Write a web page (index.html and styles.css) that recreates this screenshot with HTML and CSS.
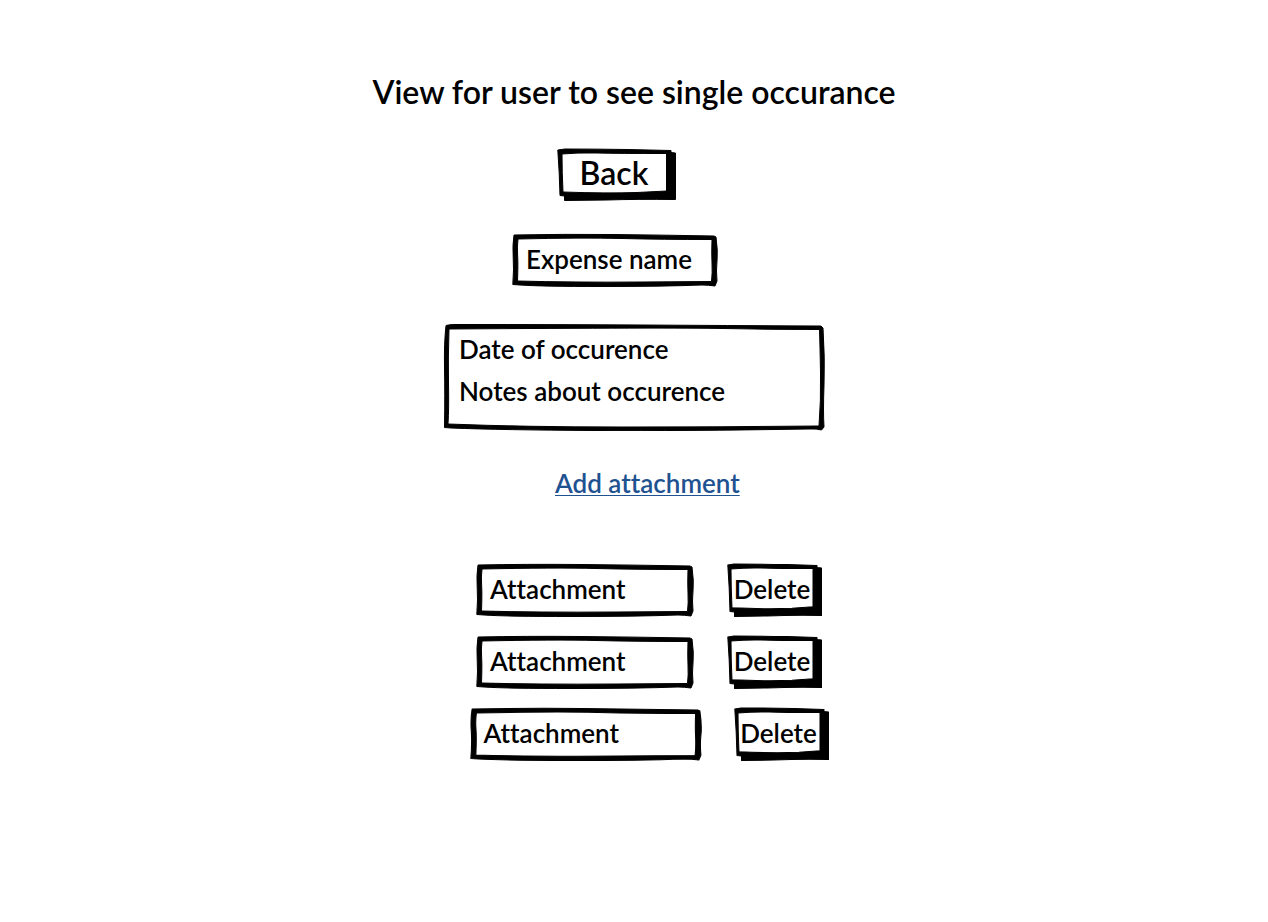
FILE: index.html
```html
<!DOCTYPE html>
<html lang="en">
<head>
<meta charset="utf-8">
<meta name="viewport" content="width=device-width, initial-scale=1">
<title>Single occurance</title>
<link rel="stylesheet" href="styles.css">
</head>
<body>
<svg class="defs" aria-hidden="true">
  <symbol id="box-s" viewBox="0 0 206 54" preserveAspectRatio="none">
    <path fill-rule="evenodd" d="M2 2Q50 1 100 1.500T202 3L204 4Q206 18 205 28T205 48L203 53Q196 52 190 52Q150 53.500 90 53.500T8 52L.8 51.500Q2 36 1.200 24T2 2ZM6 6Q5 14 5.600 22T5.500 48Q60 49.500 130 49L199.500 48.500Q200.500 40 200 30T200 6.500Q150 6.500 110 5.500T6 6Z"/>
  </symbol>
  <symbol id="box-l" viewBox="0 0 382 108" preserveAspectRatio="none">
    <path fill-rule="evenodd" d="M3 2.500Q6 1.500 12 1.500Q120 1.500 200 2T378 3L380 5Q382 35 381 62T381 104L378.500 107Q374 105.500 366 106Q240 108 150 107.500T8 105L1.500 104.500Q2 70 1.500 45T3 2.500ZM6 6Q5 35 5.500 60T5 101Q80 104 180 104T376 103Q378 78 377.500 50T376.500 6.500Q330 6.500 280 5.500T6 6Z"/>
  </symbol>
  <symbol id="box-m" viewBox="0 0 218 54" preserveAspectRatio="none">
    <path fill-rule="evenodd" d="M2 2Q50 1 105 1.500T214 3L216 4Q218 18 217 28T217 48L215 53Q208 52 202 52Q160 53.500 95 53.500T8 52L.8 51.500Q2 36 1.200 24T2 2ZM6 6Q5 14 5.600 22T5.500 48Q60 49.500 140 49L211.500 48.500Q212.500 40 212 30T212 6.500Q160 6.500 120 5.500T6 6Z"/>
  </symbol>
  <symbol id="btn-l" viewBox="0 0 119 53" preserveAspectRatio="none">
    <path fill-rule="evenodd" d="M.8 2L8 1Q40 1 70 1.500L114 2.500V4.500L118.500 5V51.500Q80 51 50 52L7.500 52.500V48L3 47.500Q2.500 25 .8 2ZM5 6Q5 24 6 44Q50 45.500 80 44.500L109.500 43V5.500Q60 5.500 40 5T5 6Z"/>
  </symbol>
  <symbol id="btn-s" viewBox="0 0 95 53" preserveAspectRatio="none">
    <path fill-rule="evenodd" d="M.8 2L7 1Q35 1 60 1.500L90 2.500V4.500L94.500 5V51.500Q65 51 40 52L7.500 52.500V48L3 47.500Q2.500 25 .8 2ZM4 6Q4 24 5 44Q40 45.500 65 44.500L86 43V5.500Q50 5.500 35 5T4 6Z"/>
  </symbol>
</svg>
<main class="page">
  <h1 class="title">View for user to see single occurance</h1>
  <div class="content">
    <button class="btn btn-back" type="button"><svg class="frame" aria-hidden="true"><use href="#btn-l"/></svg>Back</button>
    <h2 class="box name"><svg class="frame" aria-hidden="true"><use href="#box-s"/></svg>Expense name</h2>
    <section class="box details">
      <svg class="frame" aria-hidden="true"><use href="#box-l"/></svg>
      <p class="line">Date of occurence</p>
      <p class="line">Notes about occurence</p>
    </section>
    <a class="add" href="#">Add attachment</a>
    <ul class="list">
      <li class="row">
        <span class="box file"><svg class="frame" aria-hidden="true"><use href="#box-m"/></svg>Attachment</span>
        <button class="btn" type="button"><svg class="frame" aria-hidden="true"><use href="#btn-s"/></svg>Delete</button>
      </li>
      <li class="row">
        <span class="box file"><svg class="frame" aria-hidden="true"><use href="#box-m"/></svg>Attachment</span>
        <button class="btn" type="button"><svg class="frame" aria-hidden="true"><use href="#btn-s"/></svg>Delete</button>
      </li>
      <li class="row row-wide">
        <span class="box file"><svg class="frame" aria-hidden="true"><use href="#box-m"/></svg>Attachment</span>
        <button class="btn" type="button"><svg class="frame" aria-hidden="true"><use href="#btn-s"/></svg>Delete</button>
      </li>
    </ul>
  </div>
</main>
</body>
</html>
```
FILE: styles.css
```css
* { box-sizing: border-box; }

body {
  margin: 0;
  background: #fff;
  color: #000;
  font-family: Lato, "Open Sans", sans-serif;
  font-size: 26px;
  font-weight: 600;
  font-variant-ligatures: none;
  line-height: 32px;
}

h1, h2, p, ul { margin: 0; padding: 0; font-weight: inherit; }

.defs { position: absolute; width: 0; height: 0; }

.page {
  display: flex;
  flex-direction: column;
  align-items: center;
  gap: 38px;
  padding: 74px 16px 32px;
}

.title { font-size: 32px; line-height: 36px; text-align: center; }

.content {
  display: flex;
  flex-direction: column;
  align-items: flex-start;
  width: 100%;
  max-width: 382px;
}

.box, .btn { position: relative; }

.frame {
  position: absolute;
  inset: 0;
  width: 100%;
  height: 100%;
  overflow: visible;
  stroke: #000;
  stroke-width: 1px;
  stroke-linejoin: round;
  pointer-events: none;
}

.btn {
  width: 95px;
  padding: 10px 9px 12px 4px;
  border: 0;
  background: none;
  color: inherit;
  font: inherit;
  white-space: nowrap;
  display: flex;
  justify-content: center;
  cursor: pointer;
}

.btn-back {
  width: 119px;
  margin-left: 114px;
  padding: 9px 9px 12px 4px;
  font-size: 32px;
}

.name {
  min-width: 206px;
  margin: 32px 0 0 69px;
  padding: 10px 14px 12px;
  font-size: 26px;
}

.details {
  display: flex;
  flex-direction: column;
  gap: 10px;
  width: 100%;
  margin-top: 36px;
  padding: 10px 16px 24px;
}

.add {
  margin: 36px 0 0 112px;
  color: #1f5291;
  text-decoration: underline;
  text-decoration-thickness: 1px;
  text-decoration-skip-ink: none;
  text-underline-offset: 2px;
}

.list {
  display: flex;
  flex-direction: column;
  align-items: center;
  gap: 18px;
  width: 346px;
  margin: 64px 0 0 33px;
  list-style: none;
}

.row { display: flex; gap: 33px; }
.file { width: 218px; padding: 10px 14px 12px; }
.row-wide { gap: 32px; }
.row-wide .file { width: 232px; }
```
